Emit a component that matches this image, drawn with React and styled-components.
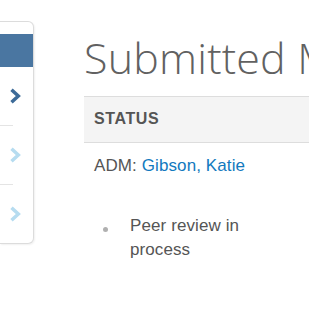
import React from "react";
import styled, { createGlobalStyle } from "styled-components";

const Global = createGlobalStyle`
  html, body { margin: 0; padding: 0; background: #fff; }
  body { font-family: "Liberation Sans", Arial, sans-serif; overflow: hidden; }
`;

const Page = styled.div`
  display: flex;
  align-items: flex-start;
  padding-top: 21px;
  width: 309px;
  height: 315px;
  box-sizing: border-box;
  overflow: hidden;
`;

const Sidebar = styled.nav`
  flex: none;
  width: 34px;
  box-sizing: border-box;
  border: 1px solid #dcdcdc;
  border-left: none;
  border-radius: 0 6px 6px 0;
  box-shadow: 1px 1px 2px rgba(0, 0, 0, 0.06);
  padding-top: 12px;
  background: #fff;
`;

const SideHeader = styled.div`
  height: 33px;
  background: #4a76a1;
`;

const SideItem = styled.div`
  display: flex;
  align-items: center;
  height: 58px;
  position: relative;
  border-bottom: ${(p) => (p.$last ? "none" : "1px solid transparent")};
`;

const Divider = styled.div`
  position: absolute;
  left: 0;
  bottom: -1px;
  width: 13px;
  height: 1px;
  background: #e4e4e4;
`;

const Chevron = styled.svg`
  margin-left: 9px;
  flex: none;
`;

const Main = styled.main`
  flex: none;
  width: 400px;
  margin-left: 50px;
`;

const Title = styled.h1`
  margin: 13px 0 15px;
  font-family: "Open Sans", sans-serif;
  font-weight: 300;
  font-size: 43px;
  line-height: 47px;
  letter-spacing: 0.2px;
  color: #616161;
  white-space: nowrap;
`;

const Table = styled.div`
  width: 400px;
`;

const HeadCell = styled.div`
  background: #f4f4f4;
  border-top: 1px solid #dddddd;
  border-bottom: 1px solid #dddddd;
  padding: 12px 10px 13px;
  font-size: 16px;
  line-height: 20px;
  font-weight: 700;
  letter-spacing: 0.6px;
  color: #555;
`;

const BodyCell = styled.div`
  padding: 11px 10px 0;
  font-size: 17px;
  line-height: 24px;
  letter-spacing: 0.1px;
  color: #555;
`;

const Link = styled.a`
  color: #1279be;
  text-decoration: none;
`;

const List = styled.ul`
  list-style: none;
  margin: 36px 0 0;
  padding: 0;
`;

const Item = styled.li`
  display: flex;
  align-items: flex-start;
`;

const Dot = styled.span`
  flex: none;
  width: 5px;
  height: 5px;
  border-radius: 50%;
  background: #b0b0b0;
  margin: 13px 0 0 9px;
`;

const ItemText = styled.span`
  margin-left: 22px;
  width: 140px;
`;

const ChevronIcon = ({ color }) => (
  <Chevron width="12" height="16" viewBox="0 0 12 16">
    <polyline
      points="2.5,1.8 9.3,8 2.5,14.2"
      fill="none"
      stroke={color}
      strokeWidth="3.5"
      strokeLinejoin="miter"
    />
  </Chevron>
);

export default function App() {
  return (
    <>
      <Global />
      <Page>
        <Sidebar>
          <SideHeader />
          <SideItem>
            <ChevronIcon color="#3d6b98" />
            <Divider />
          </SideItem>
          <SideItem>
            <ChevronIcon color="#b6dcf0" />
            <Divider />
          </SideItem>
          <SideItem $last>
            <ChevronIcon color="#b6dcf0" />
          </SideItem>
        </Sidebar>
        <Main>
          <Title>Submitted Manuscripts</Title>
          <Table>
            <HeadCell>STATUS</HeadCell>
            <BodyCell>
              ADM: <Link href="#">Gibson, Katie</Link>
              <List>
                <Item>
                  <Dot />
                  <ItemText>Peer review in process</ItemText>
                </Item>
              </List>
            </BodyCell>
          </Table>
        </Main>
      </Page>
    </>
  );
}
